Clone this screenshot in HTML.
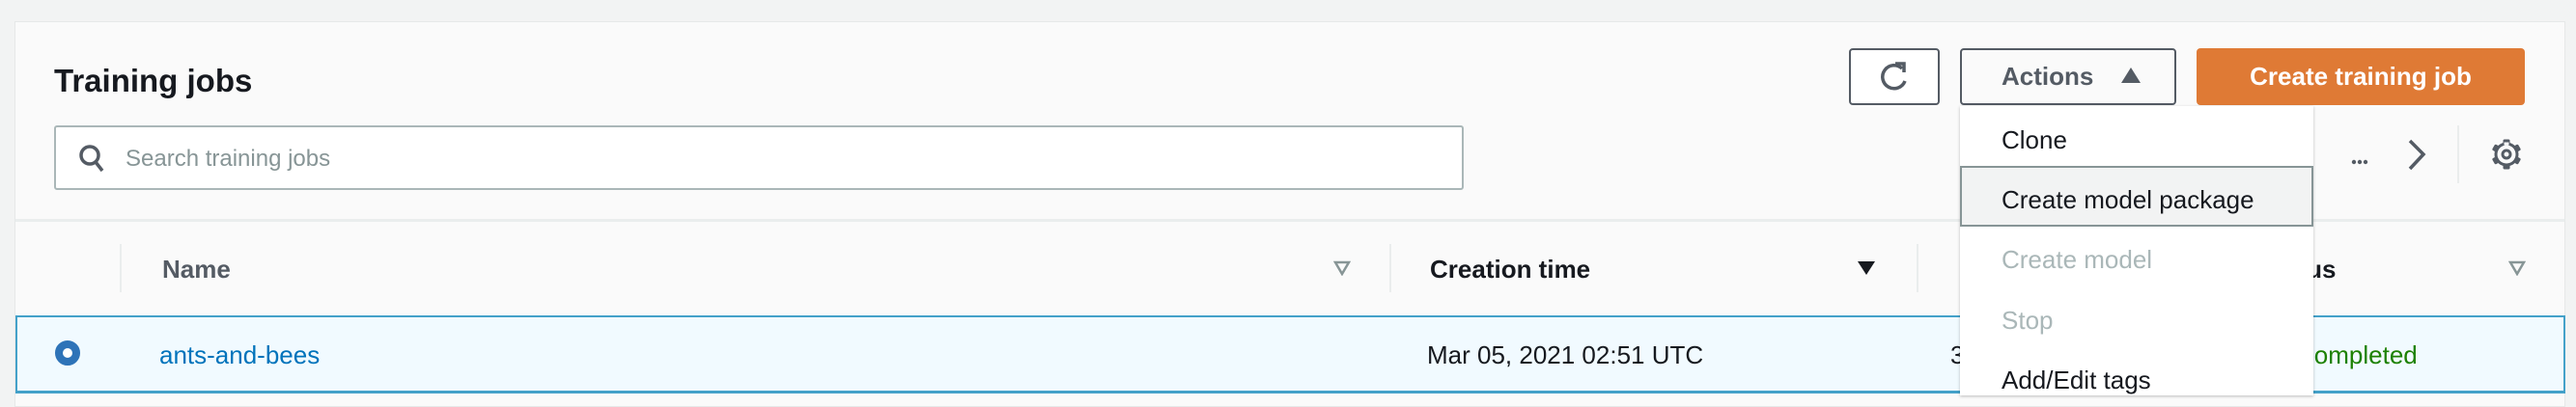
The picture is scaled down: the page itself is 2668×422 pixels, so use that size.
<!DOCTYPE html>
<html><head><meta charset="utf-8"><style>
*{margin:0;padding:0;box-sizing:border-box}
body{width:2668px;height:408px;background:#f2f3f3;position:relative;overflow:hidden;font-family:"Liberation Sans",sans-serif}
.abs{position:absolute}
.panel{left:15px;top:22px;width:2642px;height:400px;background:#fafafa;border:1px solid #e6e8e8}
.t{position:absolute;white-space:nowrap;line-height:1}
.item{position:absolute;left:2073px;font-size:26px;color:#16191f;white-space:nowrap;line-height:1}
</style></head><body>
<div class="abs panel"></div>
<div class="t" style="left:56px;top:67px;font-size:33px;font-weight:bold;color:#16191f">Training jobs</div>
<div class="abs" style="left:56px;top:130px;width:1460px;height:67px;background:#fff;border:2px solid #aab7b8;border-radius:3px"></div>
<svg class="abs" style="left:80px;top:148px" width="30" height="32" viewBox="0 0 30 32"><circle cx="13" cy="13" r="9" fill="none" stroke="#545b64" stroke-width="3.5"/><line x1="19" y1="20" x2="26" y2="29" stroke="#545b64" stroke-width="3.5"/></svg>
<div class="t" style="left:130px;top:153px;font-size:24px;color:#879596">Search training jobs</div>
<div class="abs" style="left:16px;top:227px;width:2640px;height:3px;background:#eaeded"></div>
<div class="abs" style="left:124px;top:253px;width:2px;height:50px;background:#eaeded"></div>
<div class="t" style="left:168px;top:266px;font-size:26px;font-weight:bold;color:#545b64">Name</div>
<svg class="abs" style="left:1381px;top:270px" width="18" height="16"><path d="M2 2 H16 L9 14 Z" fill="none" stroke="#879596" stroke-width="2.5"/></svg>
<div class="abs" style="left:1439px;top:253px;width:2px;height:50px;background:#eaeded"></div>
<div class="t" style="left:1481px;top:266px;font-size:26px;font-weight:bold;color:#16191f">Creation time</div>
<svg class="abs" style="left:1923px;top:270px" width="20" height="16"><path d="M1 1 H19 L10 15 Z" fill="#16191f"/></svg>
<div class="abs" style="left:1985px;top:253px;width:2px;height:50px;background:#eaeded"></div>
<div class="t" style="left:2340px;top:266px;font-size:26px;font-weight:bold;color:#16191f">Status</div>
<svg class="abs" style="left:2598px;top:270px" width="18" height="16"><path d="M2 2 H16 L9 14 Z" fill="none" stroke="#879596" stroke-width="2.5"/></svg>
<div class="abs" style="left:16px;top:327px;width:2641px;height:81px;background:#f1faff;border:2px solid #44a1c9;border-bottom-width:3px"></div>
<div class="abs" style="left:57px;top:353px;width:26px;height:26px;border-radius:50%;border:8px solid #2e73b8;background:#fff"></div>
<div class="t" style="left:165px;top:355px;font-size:26px;color:#0073bb">ants-and-bees</div>
<div class="t" style="left:1478px;top:355px;font-size:26px;color:#16191f">Mar 05, 2021 02:51 UTC</div>
<div class="t" style="left:2020px;top:355px;font-size:26px;color:#16191f">3</div>
<div class="t" style="left:2378px;top:355px;font-size:26px;color:#1d8102">Completed</div>
<div class="abs" style="left:1915px;top:50px;width:94px;height:59px;border:2px solid #545b64;border-radius:4px;background:#fff"></div>
<svg class="abs" style="left:1944px;top:62px" width="36" height="36" viewBox="0 0 36 36"><path d="M26 9 A12 12 0 1 0 29 22" fill="none" stroke="#545b64" stroke-width="3.5"/><path d="M19 4 H28 V13" fill="none" stroke="#545b64" stroke-width="3.5"/></svg>
<div class="abs" style="left:2030px;top:50px;width:224px;height:59px;border:2px solid #545b64;border-radius:4px;background:#fafafa"></div>
<div class="t" style="left:2073px;top:66px;font-size:26px;font-weight:bold;color:#545b64">Actions</div>
<svg class="abs" style="left:2196px;top:69px" width="22" height="18"><path d="M11 1 L21 17 H1 Z" fill="#545b64"/></svg>
<div class="abs" style="left:2275px;top:50px;width:340px;height:59px;background:#df7a35;border-radius:4px"></div>
<div class="t" style="left:2275px;top:66px;width:340px;text-align:center;font-size:26px;font-weight:bold;color:#fff">Create training job</div>
<svg class="abs" style="left:2434px;top:163px" width="20" height="10"><circle cx="4" cy="5" r="2.2" fill="#545b64"/><circle cx="10" cy="5" r="2.2" fill="#545b64"/><circle cx="16" cy="5" r="2.2" fill="#545b64"/></svg>
<svg class="abs" style="left:2492px;top:144px" width="24" height="34"><path d="M4 2 L18 16 L4 31" fill="none" stroke="#545b64" stroke-width="3.5"/></svg>
<div class="abs" style="left:2545px;top:130px;width:2px;height:60px;background:#eaeded"></div>
<svg class="abs" style="left:2578px;top:142px" width="36" height="36" viewBox="0 0 36 36"><g fill="#545b64"><circle cx="18" cy="18" r="12.5"/><rect x="14.5" y="2.5" width="7" height="31" rx="1.5"/><rect x="14.5" y="2.5" width="7" height="31" rx="1.5" transform="rotate(60 18 18)"/><rect x="14.5" y="2.5" width="7" height="31" rx="1.5" transform="rotate(120 18 18)"/></g><circle cx="18" cy="18" r="9.5" fill="#fafafa"/><rect x="15.5" y="5.5" width="5" height="3" fill="#fafafa"/><circle cx="18" cy="18" r="4" fill="none" stroke="#545b64" stroke-width="3"/></svg>
<div class="abs" style="left:2030px;top:110px;width:366px;height:300px;background:#fff;box-shadow:0 1px 3px rgba(0,0,0,.25)"></div>
<div class="item" style="top:132px">Clone</div>
<div class="abs" style="left:2030px;top:172px;width:366px;height:63px;background:#f2f3f3;border:2px solid #879596"></div>
<div class="item" style="top:194px">Create model package</div>
<div class="item" style="top:256px;color:#aab7b8">Create model</div>
<div class="item" style="top:319px;color:#aab7b8">Stop</div>
<div class="item" style="top:381px">Add/Edit tags</div>
</body></html>
